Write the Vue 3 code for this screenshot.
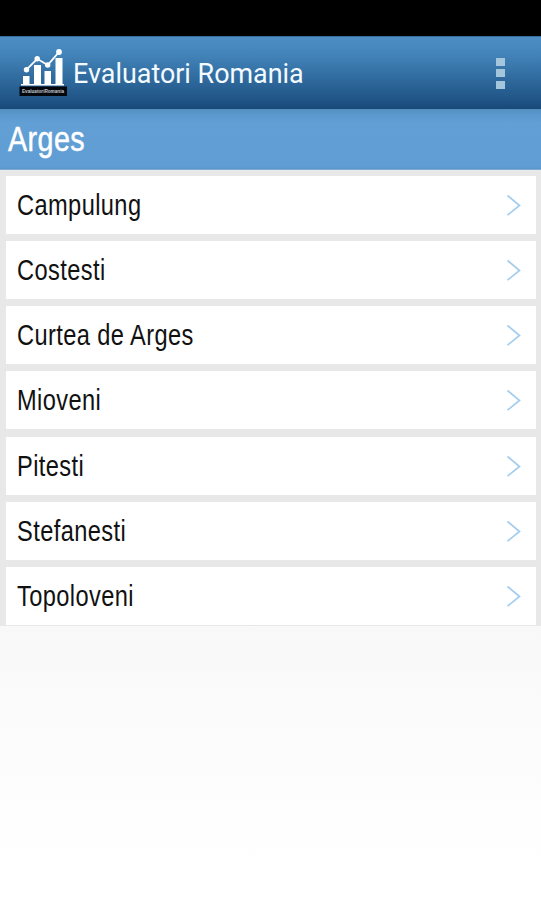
<template>
  <main class="screen">
    <div class="status_bar"></div>

    <header class="action_bar">
      <svg class="logo" width="50" height="50" viewBox="0 0 50 50">
        <g fill="#fff">
          <rect x="5" y="28" width="6.500" height="9" />
          <rect x="16" y="17" width="7" height="20" />
          <rect x="26.500" y="23" width="6.500" height="14" />
          <rect x="37.500" y="10" width="7" height="27" />
          <rect x="3" y="36" width="43" height="1.500" />
          <circle cx="8.500" cy="21.700" r="2.700" />
          <circle cx="19.200" cy="10.800" r="2.700" />
          <circle cx="29.700" cy="17" r="2.700" />
          <circle cx="41" cy="4" r="2.900" />
        </g>
        <path d="M8.500 21.700 L19.200 10.800 L29.700 17 L41 4" fill="none" stroke="#fff" stroke-width="1.800" />
        <rect x="1.500" y="38.500" width="47.500" height="9.500" fill="#03070c" />
        <text x="4" y="45" textLength="42" lengthAdjust="spacingAndGlyphs" class="logo_text">EvaluatoriRomania</text>
      </svg>
      <h1 class="title">Evaluatori Romania</h1>
      <button class="menu" aria-label="Menu">
        <span></span>
        <span></span>
        <span></span>
      </button>
    </header>

    <h2 class="county"><span class="narrow">Arges</span></h2>

    <ul class="cities">
      <li v-for="city in cities" :key="city" class="city">
        <span class="narrow">{{ city }}</span>
        <svg class="arrow" width="16" height="22" viewBox="0 0 16 22">
          <path d="M1.500 1.500 L13.500 11.500 L1.500 21.200" fill="none" stroke="#a3cdef" stroke-width="1.700" />
        </svg>
      </li>
    </ul>
  </main>
</template>

<script setup>
  import { ref } from 'vue';

  const cities = ref([
    'Campulung',
    'Costesti',
    'Curtea de Arges',
    'Mioveni',
    'Pitesti',
    'Stefanesti',
    'Topoloveni'
  ]);
</script>

<style>
body {
  margin: 0;
}
</style>

<style scoped>
* {
  box-sizing: border-box;
}

.screen {
  height: 900px;
  overflow: hidden;
  background: linear-gradient(#fff 0, #f8f8f8 626px, #fcfcfc 745px, #fff 870px);
}

.status_bar {
  height: 36px;
  background-color: #000;
}

.action_bar {
  display: flex;
  align-items: center;
  height: 73px;
  padding: 0 36px 0 18px;
  background: linear-gradient(#4d8fc5 0, #4486bc 15px, #1c4f80 68px, #184975 100%);
  border-top: 1px solid #3a6d98;
}

.logo {
  flex: none;
}

.logo_text {
  font: bold 5px "Liberation Sans", sans-serif;
  fill: #c4c8cc;
}

.title {
  margin: 2px auto 0 5px;
  font: 400 26.9px/32px Roboto, sans-serif;
  color: #f3fbff;
  white-space: nowrap;
}

.menu {
  display: flex;
  flex-direction: column;
  gap: 3.500px;
  padding: 0;
  border: 0;
  background: none;
}

.menu span {
  width: 9px;
  height: 8px;
  background-color: #a3c6dd;
}

.narrow {
  display: inline-block;
  transform: scaleX(.82);
  transform-origin: left center;
  letter-spacing: .5px;
  white-space: nowrap;
}

.county {
  height: 61px;
  margin: 0;
  padding-left: 8px;
  font: 400 35px/60px "Liberation Sans", Arial, sans-serif;
  color: #fff;
  -webkit-text-stroke: .5px #fff;
  background: linear-gradient(#558fc1 0, #5b98cd 6px, #629fd5 14px, #5f9dd4 58px, #5794cb 60px, #a4c3dd 61px);
}

.cities {
  display: flex;
  flex-direction: column;
  gap: 7.100px;
  height: 456px;
  margin: 0;
  padding: 6.200px 5px 0 6px;
  list-style: none;
  background-color: #e8e8e8;
}

.city {
  display: flex;
  flex: none;
  align-items: center;
  justify-content: space-between;
  height: 58px;
  padding: 0 14px 0 11.300px;
  font: 400 28.8px/58px "Liberation Sans", Arial, sans-serif;
  color: #111;
  background-color: #fff;
}
</style>
